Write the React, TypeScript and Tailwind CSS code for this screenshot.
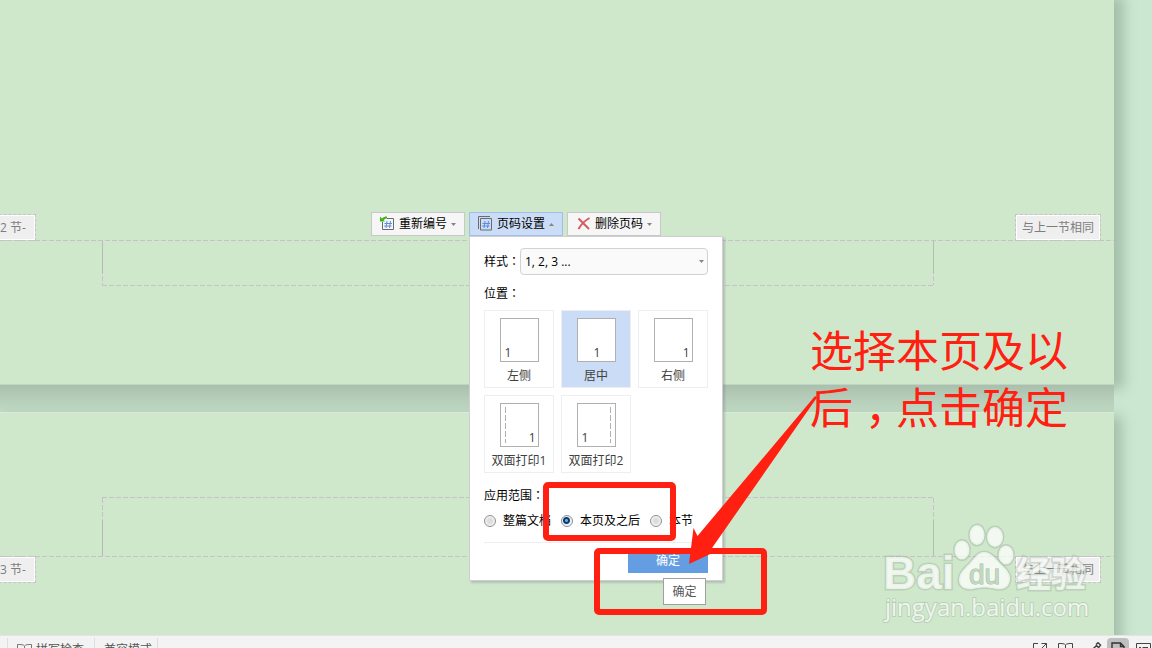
import React, { useState } from 'react'

const positions = [
  { id: 'left', label: '左侧', align: 'justify-start', fold: '' },
  { id: 'center', label: '居中', align: 'justify-center', fold: '' },
  { id: 'right', label: '右侧', align: 'justify-end', fold: '' },
  { id: 'duplex1', label: '双面打印1', align: 'justify-end', fold: 'left' },
  { id: 'duplex2', label: '双面打印2', align: 'justify-start', fold: 'right' },
]

const scopes = [
  { id: 'all', label: '整篇文档', box: 'w-[77px]' },
  { id: 'after', label: '本页及之后', box: 'w-[89px]' },
  { id: 'section', label: '本节', box: '' },
]

const dashX = 'h-px bg-[repeating-linear-gradient(90deg,#c6c2c7_0_5px,transparent_5px_7px)]'
const dashY = 'w-px bg-[repeating-linear-gradient(180deg,#c6c2c7_0_5px,transparent_5px_7px)]'

// full-width colon centred in its cell
function Colon() {
  return <span lang="zh-TW" className="font-['Noto_Sans_CJK_TC',sans-serif]">：</span>
}

function Caret({ up = false }: { up?: boolean }) {
  return (
    <svg viewBox="0 0 5 3" className="w-[5px] h-[3px]" fill="#858585">
      <path d={up ? 'M0 3L2.5 0L5 3Z' : 'M0 0H5L2.5 3Z'} />
    </svg>
  )
}

function RenumberIcon() {
  return (
    <svg viewBox="0 0 14 15" className="w-[14px] h-[15px] -mt-[2px]" fill="none">
      <path d="M7 2.5H13.5V13.5H2.5V6" stroke="#6b6b6b" />
      <path d="M7 5L6 12M10.5 5L9.5 12M4.5 7.5H12M4 10H11.5" stroke="#5c8de0" />
      <path d="M0 0.5V5.5H5L3.6 4C4.5 3 5.6 2.4 7 2.4V0.4C5 0.4 3.4 1 2 2.4Z" fill="#41b31c" />
    </svg>
  )
}

function SettingsIcon() {
  return (
    <svg viewBox="0 0 14 15" className="w-[14px] h-[15px] -mt-[2px]" fill="none">
      <path d="M0.5 13V0.5H12" stroke="#6b6b6b" />
      <path d="M2.5 2.5H13.5V14H2.5Z" stroke="#6b6b6b" />
      <path d="M7 5L6 12M10.5 5L9.5 12M4.5 7.5H12M4 10H11.5" stroke="#5c8de0" />
    </svg>
  )
}

function DeleteIcon() {
  return (
    <svg viewBox="0 0 14 15" className="w-[14px] h-[15px] -mt-[2px]" fill="none" stroke="#d75a5e" strokeWidth="2">
      <path d="M2.5 2.5L13 13M13.5 2C9 4.5 5 8.5 2.5 13" />
    </svg>
  )
}

function SectionTag({ children }: { children: React.ReactNode }) {
  return (
    <div className="shrink-0 h-[27px] border border-dashed border-[#c6c2c7]">
      <div className="h-full border border-white bg-[#efefef] px-[5px] text-[#7d7d7d] leading-6 whitespace-nowrap">
        {children}
      </div>
    </div>
  )
}

function Toolbar() {
  const base = 'flex items-center w-[94px] h-6 pl-2 border text-black'
  return (
    <div className="flex gap-1">
      <button className={`${base} bg-[#f6f6f6] border-[#c8c8c8]`}>
        <RenumberIcon />
        <span className="ml-[5px] mr-1">重新编号</span>
        <Caret />
      </button>
      <button className={`${base} bg-[#cbddf6] border-[#a0bfe8]`}>
        <SettingsIcon />
        <span className="ml-[5px] mr-1">页码设置</span>
        <Caret up />
      </button>
      <button className={`${base} bg-[#f6f6f6] border-[#c8c8c8]`}>
        <DeleteIcon />
        <span className="ml-[5px] mr-1">删除页码</span>
        <Caret />
      </button>
    </div>
  )
}

function PageNumberPanel() {
  const [position, setPosition] = useState('center')
  const [scope, setScope] = useState('after')

  return (
    <div className="w-[254px] h-[345px] px-[14px] pt-[11px] bg-white border border-[#cfcfd2] shadow-[2px_2px_2px_rgba(120,120,130,0.35)] text-black">
      <div className="flex items-center">
        <label htmlFor="style" className="w-9 shrink-0 whitespace-nowrap">样式<Colon /></label>
        <div className="relative flex-1">
          <select id="style" className="block appearance-none w-full h-[27px] pl-1 border border-[#d2d2d2] rounded-[4px] bg-[#fafafa]">
            <option>1, 2, 3 ...</option>
          </select>
          <span className="absolute right-1 top-3 pointer-events-none"><Caret /></span>
        </div>
      </div>

      <p className="mt-[10px] leading-4">位置<Colon /></p>
      <div className="mt-2 grid grid-cols-3 gap-[7px]">
        {positions.map(p => (
          <button
            key={p.id}
            onClick={() => setPosition(p.id)}
            className={`flex flex-col items-center h-[78px] pt-[7px] border border-[#eeeeee] text-[#404040] whitespace-nowrap ${position === p.id ? 'bg-[#cbddf6]' : 'bg-white'}`}
          >
            <span className={`flex items-end w-[39px] h-11 pl-1 pr-[2px] border border-[#b0b0b0] bg-white leading-4 ${p.align}`}>
              {p.fold === 'left' && <span className="self-center mr-auto w-px h-9 bg-[repeating-linear-gradient(180deg,#b0b0b0_0_6px,transparent_6px_8px)]" />}
              1
              {p.fold === 'right' && <span className="self-center ml-auto mr-[2px] w-px h-9 bg-[repeating-linear-gradient(180deg,#b0b0b0_0_6px,transparent_6px_8px)]" />}
            </span>
            <span className="mt-[5px] leading-[18px]">{p.label}</span>
          </button>
        ))}
      </div>

      <p className="mt-[14px] leading-4">应用范围<Colon /></p>
      <div className="mt-2 flex items-center h-[18px]">
        {scopes.map(s => (
          <label key={s.id} className={`flex items-center gap-[7px] shrink-0 whitespace-nowrap ${s.box}`}>
            <input
              type="radio"
              name="scope"
              checked={scope === s.id}
              onChange={() => setScope(s.id)}
              className="appearance-none shrink-0 w-3 h-3 rounded-full border border-[#8c8f94] bg-[radial-gradient(circle,#dcdcdc_0_2px,#f6f6f6_5px)] checked:bg-[radial-gradient(circle_at_45%_45%,#58b5e8_0_1px,#123a66_2px_3px,#eef2f6_4px)]"
            />
            {s.label}
          </label>
        ))}
      </div>

      <div className="mt-3 pt-[5px] border-t border-[#eeeeee] flex justify-end">
        <button className="w-20 h-[25px] bg-[#659de3] text-white">确定</button>
      </div>
    </div>
  )
}

function Watermark() {
  return (
    <svg viewBox="0 0 220 110" className="w-[220px] h-[110px]" fill="#ffffff" fillOpacity="0.72" stroke="#9fb59f" strokeOpacity="0.45" strokeWidth="3" paintOrder="stroke">
      <text x="3" y="69" fontSize="46" className="font-['Liberation_Sans',sans-serif] font-bold">Bai</text>
      <ellipse cx="82" cy="30" rx="7.5" ry="9.5" />
      <ellipse cx="97" cy="15" rx="7.5" ry="10" />
      <ellipse cx="115" cy="17" rx="8" ry="10" />
      <ellipse cx="126" cy="35" rx="7.5" ry="9.5" />
      <path d="M104 32C111 32 115 38 120 43C126 49 131 53 130 60C129 68 123 70 116 69C108 67 101 67 93 69C85 70 79 67 79 60C79 53 84 49 89 44C94 39 97 32 104 32Z" />
      <text x="89" y="64" fontSize="28" fill="#c3d9c0" fillOpacity="1" stroke="#a3b8a3" strokeOpacity="1" strokeWidth="1" className="font-['Liberation_Sans',sans-serif]">du</text>
      <text x="136" y="67" fontSize="35" className="font-['Noto_Sans_CJK_SC',sans-serif] font-bold">经验</text>
      <text x="5" y="96" fontSize="24" strokeWidth="2" fillOpacity="0.8" className="font-['Open_Sans',sans-serif]">jingyan.baidu.com</text>
    </svg>
  )
}

function Annotations() {
  return (
    <div className="absolute inset-0 pointer-events-none">
      <div className="absolute left-[543px] top-[482px] w-[133px] h-[59px] border-6 border-[#ff2012] rounded-[5px]" />
      <div className="absolute left-[594px] top-[548px] w-[173px] h-[67px] border-6 border-[#ff2012] rounded-[5px]" />
      <svg viewBox="0 0 140 180" className="absolute left-[685px] top-[390px] w-[140px] h-[180px]" fill="#ff2012">
        <path d="M130 6L132 7.5L27 158L36 159L4 174L8.5 138L12.5 146Z" />
      </svg>
      <p className="absolute left-[810px] top-[322px] text-[43px] leading-[57px] text-[#ff2012] whitespace-nowrap">
        选择本页及以<br />后<span className="inline-block w-[43px] pl-3">，</span>点击确定
      </p>
    </div>
  )
}

function StatusBar() {
  return (
    <footer className="h-[13px] overflow-hidden bg-[#f3f3f3] border-t border-[#e4e4e4]">
      <div className="flex justify-between h-6 text-[#555555]">
        <div className="flex pt-[2px]">
          <div className="w-2 border-r border-[#dedede]" />
          <div className="flex items-start gap-1 w-[87px] pl-[9px] border-r border-[#dedede]">
            <svg viewBox="0 0 15 12" className="mt-[6px] w-[15px] h-3" fill="none" stroke="#777">
              <path d="M7.5 2V12M7.5 2C6.5 0.5 4 0.5 0.5 0.5V12M7.5 2C8.5 0.5 11 0.5 14.5 0.5V12" />
            </svg>
            <span className="pt-1 leading-4">拼写检查</span>
          </div>
          <div className="w-[63px] pl-[9px] pt-1 leading-4 border-r border-[#dedede]">兼容模式</div>
        </div>
        <div className="flex items-start pt-[2px]">
          <button aria-label="全屏" className="w-6 pt-[5px]">
            <svg viewBox="0 0 14 14" className="w-[14px] h-[14px]" fill="none" stroke="#444">
              <path d="M5 0.5H0.5V5M8.5 0.5H13.5V5M13.5 0.5L7.5 6.5M0.5 9V13.5H5" />
            </svg>
          </button>
          <button aria-label="阅读版式" className="w-[31px] pl-[1px] pt-[5px]">
            <svg viewBox="0 0 15 14" className="w-[15px] h-[14px]" fill="none" stroke="#444">
              <path d="M7.5 2V13M7.5 2C6.5 0.5 4 0.5 0.5 0.5V12H6L7.5 13L9 12H14.5V0.5C11 0.5 8.5 0.5 7.5 2" />
            </svg>
          </button>
          <button aria-label="写作模式" className="w-[19px] pt-1">
            <svg viewBox="0 0 14 14" className="w-[14px] h-[14px]" fill="none" stroke="#444" strokeWidth="1.5">
              <path d="M8 2.5L10 0.7L12.5 3L6 12L2 13.5L3 9L8.5 3.5L10.5 5.5" />
            </svg>
          </button>
          <button aria-label="页面视图" className="flex justify-center w-[22px] h-5 pt-1 rounded-[4px] bg-[#bfbfbf]">
            <svg viewBox="0 0 14 14" className="w-[14px] h-[14px]" fill="none" stroke="#333" strokeWidth="1.4">
              <path d="M1 14V1H9.5L13 4.5V14M9.5 1V4.5H13" />
            </svg>
          </button>
          <button aria-label="大纲" className="w-[23px] pl-[7px] pt-[5px]">
            <svg viewBox="0 0 15 14" className="w-[15px] h-[14px]" fill="none" stroke="#444">
              <path d="M0.5 0.5H14.5V13.5H0.5ZM3 4.5H5M6.5 4.5H12M3 8.5H5M6.5 8.5H12" />
            </svg>
          </button>
        </div>
      </div>
    </footer>
  )
}

export default function App() {
  return (
    <div className="relative flex flex-col h-screen overflow-hidden bg-[#cbe7d2] font-['Open_Sans','Noto_Sans_CJK_SC',sans-serif] text-[12px] leading-4">
      <main className="flex-1 min-h-0 overflow-hidden pr-[38px]">
        <section className="h-[385px] bg-[#cfe8cb] border-b border-[#c3d3c3] shadow-[6px_0_12px_4px_#a5bfaa]">
          <div className="flex items-end justify-between h-[241px] pr-[13px]">
            <div className="flex justify-end w-9 overflow-hidden"><SectionTag>-第 2 节-&nbsp;</SectionTag></div>
            <SectionTag>与上一节相同</SectionTag>
          </div>
          <div className={`-mt-px ${dashX}`} />
          <div className="flex flex-col h-[45px] ml-[102px] mr-[180px]">
            <div className="flex flex-1 justify-between">
              <div className={dashY}><div className="h-8 bg-[#b4bcb3]" /></div>
              <div className={dashY}><div className="h-8 bg-[#b4bcb3]" /></div>
            </div>
            <div className={dashX} />
          </div>
        </section>
        <div className="relative h-[27px] bg-gradient-to-b from-[#a9c0ad] to-[#c2dbc5]" />
        <section className="relative h-[260px] bg-[#cfe8cb] border-t border-[#dce8da] shadow-[6px_6px_12px_2px_#a5bfaa]">
          <div className="flex flex-col h-[143px] pt-[84px] ml-[102px] mr-[180px]">
            <div className={dashX} />
            <div className="flex flex-1 justify-between">
              <div className={`flex items-end ${dashY}`}><div className="w-px h-9 bg-[#b4bcb3]" /></div>
              <div className={`flex items-end ${dashY}`}><div className="w-px h-9 bg-[#b4bcb3]" /></div>
            </div>
          </div>
          <div className={dashX} />
          <div className="-mt-px flex items-start justify-between pr-[13px]">
            <div className="flex justify-end w-9 overflow-hidden"><SectionTag>-第 3 节-&nbsp;</SectionTag></div>
            <SectionTag>与上一节相同</SectionTag>
          </div>
        </section>
      </main>
      <StatusBar />

      <div className="absolute left-[371px] top-[212px]">
        <Toolbar />
        <div className="ml-[98px]"><PageNumberPanel /></div>
      </div>
      <div role="tooltip" className="absolute left-[663px] top-[578px] w-[43px] h-[27px] border border-[#a0a0a0] bg-white text-center leading-[25px] text-[#575757]">
        确定
      </div>
      <div className="absolute left-[880px] top-[520px] pointer-events-none">
        <Watermark />
      </div>
      <Annotations />
    </div>
  )
}
